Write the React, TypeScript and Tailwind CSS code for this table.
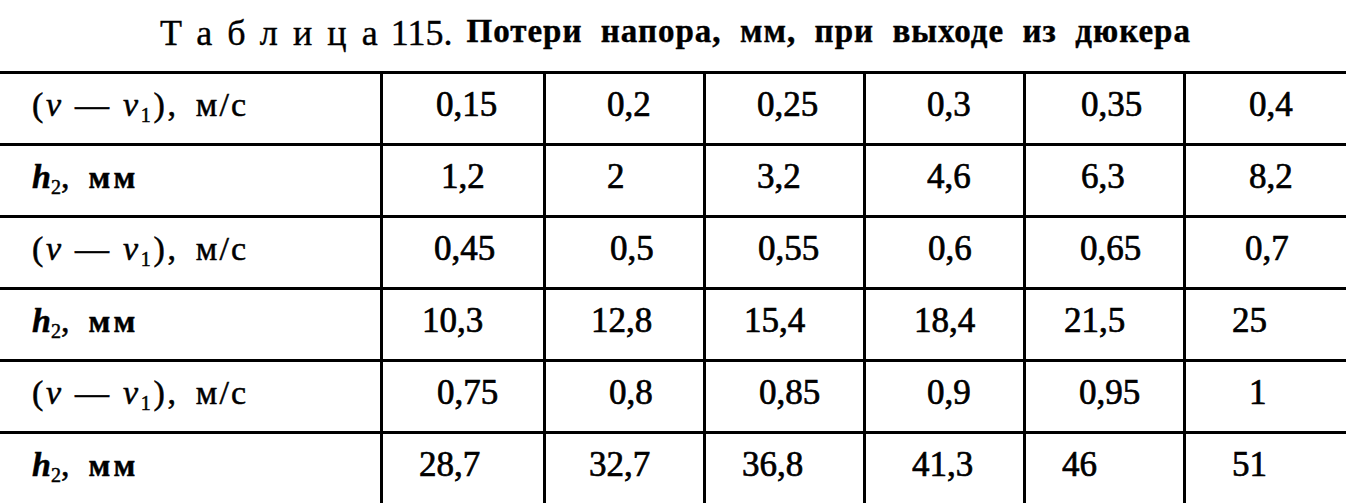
const serif = "font-['Liberation_Serif','Times_New_Roman',serif]"

type Cell = [string, string]

const rows: { kind: 'v' | 'h'; cells: Cell[] }[] = [
  {
    kind: 'v',
    cells: [
      ['0,15', 'pl-[53px]'],
      ['0,2', 'pl-[61px]'],
      ['0,25', 'pl-[51px]'],
      ['0,3', 'pl-[61px]'],
      ['0,35', 'pl-[55px]'],
      ['0,4', 'pl-[63px]'],
    ],
  },
  {
    kind: 'h',
    cells: [
      ['1,2', 'pl-[58px]'],
      ['2', 'pl-[61px]'],
      ['3,2', 'pl-[51px]'],
      ['4,6', 'pl-[61px]'],
      ['6,3', 'pl-[55px]'],
      ['8,2', 'pl-[63px]'],
    ],
  },
  {
    kind: 'v',
    cells: [
      ['0,45', 'pl-[51px]'],
      ['0,5', 'pl-[64px]'],
      ['0,55', 'pl-[52px]'],
      ['0,6', 'pl-[62px]'],
      ['0,65', 'pl-[54px]'],
      ['0,7', 'pl-[59px]'],
    ],
  },
  {
    kind: 'h',
    cells: [
      ['10,3', 'pl-[39px]'],
      ['12,8', 'pl-[45px]'],
      ['15,4', 'pl-[38px]'],
      ['18,4', 'pl-[48px]'],
      ['21,5', 'pl-[38px]'],
      ['25', 'pl-[46px]'],
    ],
  },
  {
    kind: 'v',
    cells: [
      ['0,75', 'pl-[54px]'],
      ['0,8', 'pl-[63px]'],
      ['0,85', 'pl-[53px]'],
      ['0,9', 'pl-[61px]'],
      ['0,95', 'pl-[53px]'],
      ['1', 'pl-[63px]'],
    ],
  },
  {
    kind: 'h',
    cells: [
      ['28,7', 'pl-[36px]'],
      ['32,7', 'pl-[43px]'],
      ['36,8', 'pl-[36px]'],
      ['41,3', 'pl-[46px]'],
      ['46', 'pl-[36px]'],
      ['51', 'pl-[46px]'],
    ],
  },
]

function Label({ kind }: { kind: 'v' | 'h' }) {
  if (kind === 'v') {
    return (
      <span className="whitespace-pre">
        <span className="tracking-[0.08em]">
          (<i>v</i> — <i>v</i>
          <span className="relative top-[6px] text-[20px]">1</span>),
        </span>
        {'  '}
        <span className="text-[34px] tracking-[0.06em]">м/с</span>
      </span>
    )
  }
  return (
    <span className="whitespace-pre">
      <b>
        <i>h</i>
      </b>
      <span className="relative top-[6px] text-[20px]">2</span>,{'  '}
      <span className="ml-[2px] text-[32px] font-bold tracking-[0.1em]">мм</span>
    </span>
  )
}

export default function App() {
  return (
    <div className={`w-[1346px] h-[504px] overflow-hidden bg-white text-black ${serif}`}>
      <div className="h-[71px] flex items-start pt-[15px] pl-[160px] leading-none whitespace-nowrap [-webkit-text-stroke:0.4px_black]">
        <span className="text-[36px] tracking-[0.42em]">Таблица</span>
        <span className="text-[36px] ml-[-2px]">115.</span>
        <span className="ml-[14px] text-[33px] font-bold tracking-[0.03em] [word-spacing:0.28em]">
          Потери напора, мм, при выходе из дюкера
        </span>
      </div>
      {rows.map((row, i) => (
        <div
          key={i}
          className="grid grid-cols-[380px_163px_160px_160px_160px_160px_163px] h-[72px] border-t-[3px] border-black"
        >
          <div className="pl-[32px] pt-[13px] text-[34px] leading-[35px] [-webkit-text-stroke:0.5px_black]">
            <Label kind={row.kind} />
          </div>
          {row.cells.map(([val, pad], j) => (
            <div
              key={j}
              className={`border-l-[3px] border-black pt-[13px] text-[35px] leading-[35px] [-webkit-text-stroke:0.7px_black] ${pad}`}
            >
              {val}
            </div>
          ))}
        </div>
      ))}
    </div>
  )
}
